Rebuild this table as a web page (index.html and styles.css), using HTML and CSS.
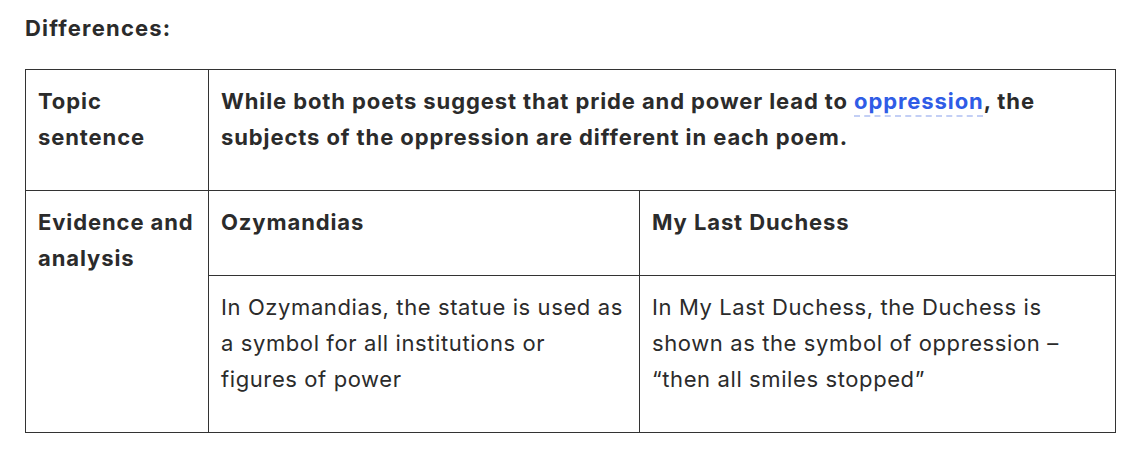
FILE: index.html
```html
<!DOCTYPE html>
<html lang="en">
<head>
<meta charset="utf-8">
<title>Differences</title>
<link rel="stylesheet" href="styles.css">
</head>
<body>
<main class="content">
  <h3 class="heading">Differences:</h3>
  <table class="grid">
    <colgroup>
      <col class="col-label">
      <col class="col-a">
      <col class="col-b">
    </colgroup>
    <tbody>
      <tr>
        <th class="cell label">Topic sentence</th>
        <td class="cell strong" colspan="2">While both poets suggest that pride and power lead to <a class="term" href="#">oppression</a>, the subjects of the oppression are different in each poem.</td>
      </tr>
      <tr>
        <th class="cell label" rowspan="2">Evidence and analysis</th>
        <td class="cell strong">Ozymandias</td>
        <td class="cell strong">My Last Duchess</td>
      </tr>
      <tr>
        <td class="cell">In Ozymandias, the statue is used as a symbol for all institutions or figures of power</td>
        <td class="cell">In My Last Duchess, the Duchess is shown as the symbol of oppression – “then all smiles stopped”</td>
      </tr>
    </tbody>
  </table>
</main>
</body>
</html>
```
FILE: styles.css
```css
* { box-sizing: border-box; }
html, body { margin: 0; padding: 0; background: #fff; }
body {
  font-family: "Inter", "Liberation Sans", sans-serif;
  color: #2b2b2b;
}
.content {
  padding: 13px 25px 0 25px;
}
.heading {
  margin: 0 0 26px 0;
  font-size: 22px;
  line-height: 30px;
  font-weight: 700;
  letter-spacing: 1.2px;
  color: #2b2b2b;
}
.grid {
  width: 1090px;
  border-collapse: collapse;
  table-layout: fixed;
  font-size: 22px;
  line-height: 36px;
}
.col-label { width: 183px; }
.col-a { width: 431px; }
.col-b { width: 476px; }
.cell {
  border: 1px solid #333;
  padding: 13px 12px 35px 12px;
  vertical-align: top;
  text-align: left;
  font-weight: 400;
  letter-spacing: 0.6px;
}
.label, .strong { font-weight: 700; letter-spacing: 0.9px; }
.term {
  color: #2f5ce6;
  text-decoration: underline dashed #c3cff5;
  text-decoration-thickness: 2px;
  text-underline-offset: 6px;
}
```
